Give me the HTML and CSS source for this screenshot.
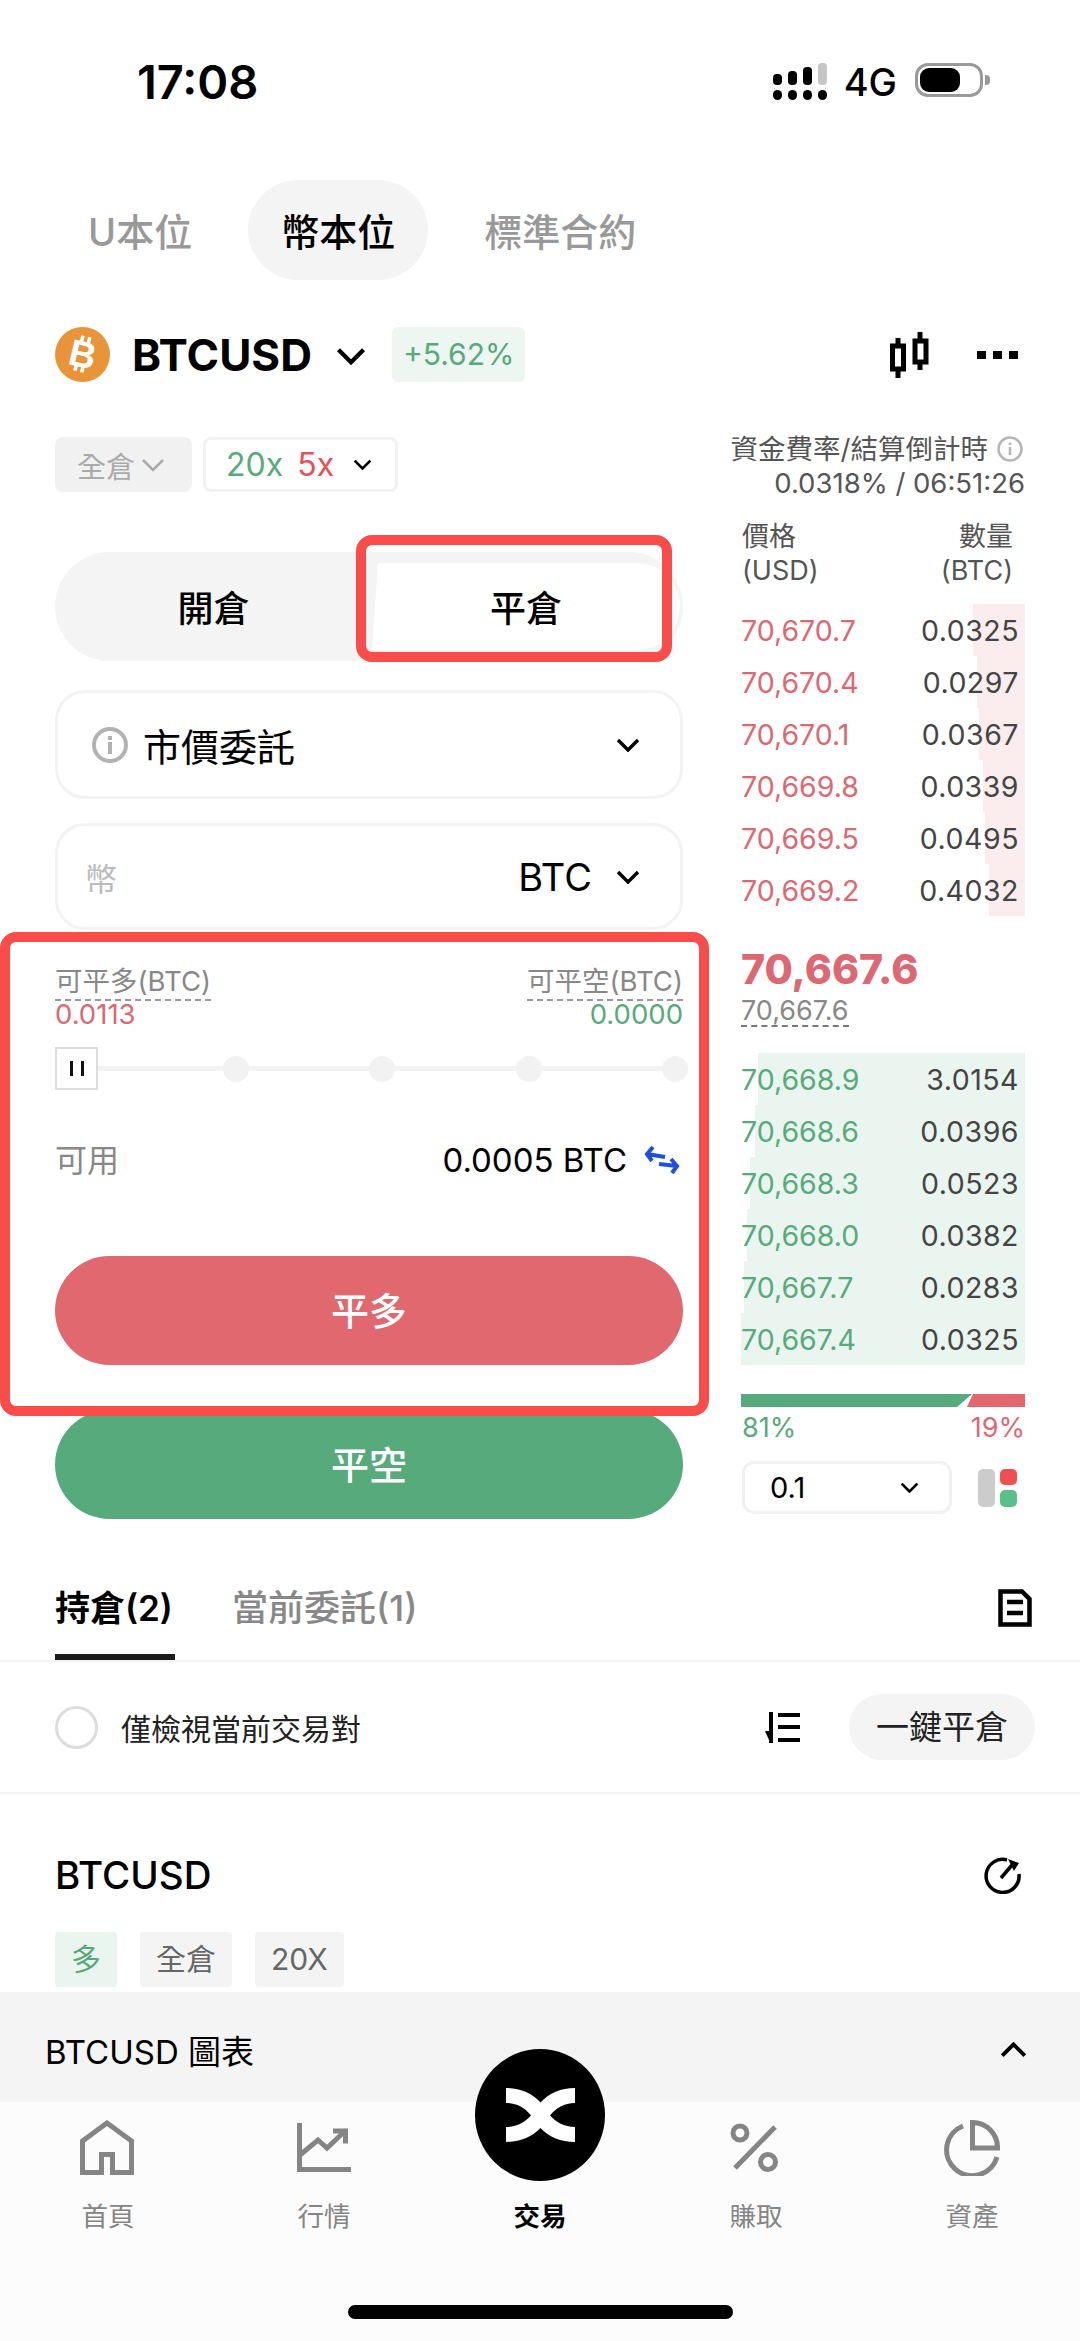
FILE: index.html
```html
<!DOCTYPE html>
<html lang="zh-Hant">
<head>
  <meta charset="UTF-8">
  <title>BTCUSD 交易</title>
  <link rel="stylesheet" href="styles.css">
</head>
<body>
<div class="page">

  <div class="status">
    <div class="time">17:08</div>
    <div class="status-right">
      <svg class="signal" width="54" height="37" viewBox="0 0 54 37">
        <rect x="0" y="11" width="9" height="11" rx="4"/>
        <rect x="15" y="8" width="9" height="14" rx="4"/>
        <rect x="30" y="4" width="9" height="18" rx="4"/>
        <rect x="45" y="0" width="9" height="22" rx="4" fill="#c6c6c6"/>
        <rect x="0" y="27" width="9" height="10" rx="4.5"/>
        <rect x="15" y="27" width="9" height="10" rx="4.5"/>
        <rect x="30" y="27" width="9" height="10" rx="4.5"/>
        <rect x="45" y="27" width="9" height="10" rx="4.5"/>
      </svg>
      <span class="net">4G</span>
      <div class="battery"><div class="battery-fill"></div></div>
      <div class="battery-nub"></div>
    </div>
  </div>

  <div class="market-tabs">
    <div class="market-tab">U本位</div>
    <div class="market-tab on">幣本位</div>
    <div class="market-tab">標準合約</div>
  </div>

  <div class="symbol-row">
    <svg class="coin" width="55" height="55" viewBox="0 0 55 55">
      <circle cx="27.5" cy="27.5" r="27.5" fill="#e8953a"/>
      <g transform="rotate(13 27.5 27.5)" fill="#fff">
        <text x="27.5" y="40" text-anchor="middle" font-family="Liberation Sans" font-weight="700" font-size="37">B</text>
        <rect x="22" y="9" width="3.5" height="6"/><rect x="29" y="9" width="3.5" height="6"/>
        <rect x="22" y="39" width="3.5" height="6"/><rect x="29" y="39" width="3.5" height="6"/>
      </g>
    </svg>
    <div class="symbol-name">BTCUSD</div>
    <svg class="chev chev-symbol" viewBox="0 0 24 14"><path d="M2 2l10 10L22 2"/></svg>
    <div class="change">+5.62%</div>
    <div class="symbol-tools">
      <svg width="40" height="46" viewBox="0 0 40 46" fill="none" stroke="#000" stroke-width="5">
        <path d="M9 6v40M31 0v38"/>
        <rect x="3.500" y="14" width="11" height="23" fill="#fff"/>
        <rect x="26" y="9" width="11" height="21" fill="#fff"/>
      </svg>
      <div class="more"><i></i><i></i><i></i></div>
    </div>
  </div>

  <div class="trade">
    <div class="order">
      <div class="margin-row">
        <div class="margin-mode">全倉<svg class="chev chev-gray" viewBox="0 0 24 14"><path d="M2 2l10 10L22 2"/></svg></div>
        <div class="leverage"><span class="up">20x</span><span class="down-2">5x</span><svg class="chev chev-small" viewBox="0 0 24 14"><path d="M2 2l10 10L22 2"/></svg></div>
      </div>

      <div class="segment">
        <div class="segment-item">開倉</div>
        <div class="segment-item active">平倉</div>
      </div>

      <div class="select type-select">
        <svg width="36" height="36" viewBox="0 0 36 36" fill="none">
          <circle cx="18" cy="18" r="16" stroke="#b2b2b2" stroke-width="4"/>
          <rect x="16" y="15" width="4" height="12" fill="#b2b2b2"/>
          <rect x="16" y="9" width="4" height="4" fill="#b2b2b2"/>
        </svg>
        <span class="select-text">市價委託</span>
        <svg class="chev chev-select" viewBox="0 0 24 14"><path d="M2 2l10 10L22 2"/></svg>
      </div>

      <div class="select coin-select">
        <span class="placeholder">幣</span>
        <span class="coin-code">BTC</span>
        <svg class="chev chev-select" viewBox="0 0 24 14"><path d="M2 2l10 10L22 2"/></svg>
      </div>

      <div class="closable">
        <div class="closable-col">
          <span class="closable-label">可平多(BTC)</span>
          <span class="closable-value down">0.0113</span>
        </div>
        <div class="closable-col right">
          <span class="closable-label">可平空(BTC)</span>
          <span class="closable-value up">0.0000</span>
        </div>
      </div>

      <div class="slider">
        <div class="thumb"><i></i><i></i></div>
        <div class="dot"></div>
        <div class="dot"></div>
        <div class="dot"></div>
        <div class="dot"></div>
      </div>

      <div class="available">
        <span class="available-label">可用</span>
        <span class="available-value">0.0005 BTC</span>
        <svg class="swap" width="36" height="30" viewBox="0 0 36 30" fill="none" stroke="#1f4fe0" stroke-width="4">
          <path d="M3 9l18 3M9 2L3 9l5 7"/>
          <path d="M15 19l18 2M27 14l6 7-5 7"/>
        </svg>
      </div>

      <div class="action long">平多</div>
      <div class="action short">平空</div>
    </div>

    <div class="book">
      <div class="funding">
        <div class="funding-title">資金費率/結算倒計時
          <svg width="26" height="26" viewBox="0 0 26 26" fill="none">
            <circle cx="13" cy="13" r="11.5" stroke="#b5b5b5" stroke-width="2.5"/>
            <path d="M13 11v8M13 6.500v2.500" stroke="#b5b5b5" stroke-width="2.500"/>
          </svg>
        </div>
        <div>0.0318% / 06:51:26</div>
      </div>

      <div class="book-head">
        <div>價格<br>(USD)</div>
        <div class="right">數量<br>(BTC)</div>
      </div>

      <div class="asks">
        <div class="book-row" style="--depth:52px"><span class="down">70,670.7</span><span>0.0325</span></div>
        <div class="book-row" style="--depth:48px"><span class="down">70,670.4</span><span>0.0297</span></div>
        <div class="book-row" style="--depth:46px"><span class="down">70,670.1</span><span>0.0367</span></div>
        <div class="book-row" style="--depth:42px"><span class="down">70,669.8</span><span>0.0339</span></div>
        <div class="book-row" style="--depth:40px"><span class="down">70,669.5</span><span>0.0495</span></div>
        <div class="book-row" style="--depth:36px"><span class="down">70,669.2</span><span>0.4032</span></div>
      </div>

      <div class="last-price">70,667.6</div>
      <div class="mark-price">70,667.6</div>

      <div class="bids">
        <div class="book-row" style="--depth:267px"><span class="up">70,668.9</span><span>3.0154</span></div>
        <div class="book-row" style="--depth:270px"><span class="up">70,668.6</span><span>0.0396</span></div>
        <div class="book-row" style="--depth:275px"><span class="up">70,668.3</span><span>0.0523</span></div>
        <div class="book-row" style="--depth:278px"><span class="up">70,668.0</span><span>0.0382</span></div>
        <div class="book-row" style="--depth:281px"><span class="up">70,667.7</span><span>0.0283</span></div>
        <div class="book-row" style="--depth:284px"><span class="up">70,667.4</span><span>0.0325</span></div>
      </div>

      <div class="ratio">
        <div class="ratio-long"></div>
        <div class="ratio-short"></div>
      </div>
      <div class="ratio-text"><span class="up">81%</span><span class="down">19%</span></div>

      <div class="book-tools">
        <div class="step">0.1<svg class="chev chev-small" viewBox="0 0 24 14"><path d="M2 2l10 10L22 2"/></svg></div>
        <div class="layout-icon">
          <div class="layout-bar"></div>
          <div class="layout-dots"><i class="red"></i><i class="green"></i></div>
        </div>
      </div>
    </div>
  </div>

  <div class="pos-tabs">
    <div class="pos-tab on">持倉(2)</div>
    <div class="pos-tab">當前委託(1)</div>
    <svg class="pos-note" width="34" height="38" viewBox="0 0 34 38" fill="none" stroke="#000" stroke-width="4.500">
      <path d="M2.500 2.500H24l7.500 7.500v25.500h-29z"/>
      <path d="M9 13h16M9 24h16"/>
    </svg>
  </div>

  <div class="filter">
    <div class="radio"></div>
    <span class="filter-text">僅檢視當前交易對</span>
    <svg class="sort" width="35" height="31" viewBox="0 0 35 31">
      <rect x="13" y="1" width="22" height="4"/>
      <rect x="13" y="13" width="22" height="4"/>
      <rect x="13" y="26" width="22" height="4"/>
      <rect x="4" y="0" width="4" height="31"/>
      <path d="M0 19l4 0 0 9z"/>
    </svg>
    <div class="close-all">一鍵平倉</div>
  </div>

  <div class="position">
    <div class="position-head">
      <span class="position-name">BTCUSD</span>
      <svg width="38" height="38" viewBox="0 0 38 38" fill="none" stroke="#000" stroke-width="3.500">
        <path d="M23 4A16.500 16.500 0 1 0 35 18"/>
        <path d="M17 22L28 9"/>
        <path d="M24 3l11 4-5 8z" fill="#000" stroke="none"/>
      </svg>
    </div>
    <div class="tags">
      <span class="tag tag-long">多</span>
      <span class="tag">全倉</span>
      <span class="tag">20X</span>
    </div>
  </div>

  <div class="chart-bar">
    <span>BTCUSD 圖表</span>
    <svg class="chev chev-up" viewBox="0 0 24 14"><path d="M2 12L12 2l10 10"/></svg>
  </div>

  <div class="nav">
    <div class="nav-items">
      <div class="nav-item">
        <svg width="56" height="56" viewBox="0 0 56 56" fill="none" stroke="#858585" stroke-width="5">
          <path d="M21.500 52.500H2.500V21L27 3l24.500 18v31.500H32.500v-18h-11z"/>
        </svg>
        <span>首頁</span>
      </div>
      <div class="nav-item">
        <svg width="56" height="56" viewBox="0 0 56 56" fill="none" stroke="#858585" stroke-width="5">
          <path d="M3.500 3v46.500H55"/>
          <path d="M4 35l18-15 9 8 19-18"/>
          <path d="M37 11h12.500v12.500"/>
        </svg>
        <span>行情</span>
      </div>
      <div class="nav-item on">
        <div class="nav-logo">
          <svg width="69" height="54" viewBox="0 0 69 54" fill="#fff">
            <path d="M0 0C14 0 26 5 34.500 14.500 43 5 55 0 69 0V15C58 15 50 20 44 27.500 50 34 58 39 69 39V54C55 54 43 49 34.500 40 26 49 14 54 0 54V39C11 39 19 34 25 27.500 19 20 11 15 0 15Z"/>
          </svg>
        </div>
        <div class="nav-spacer"></div>
        <span>交易</span>
      </div>
      <div class="nav-item">
        <svg width="56" height="56" viewBox="0 0 56 56" fill="none" stroke="#858585" stroke-width="5">
          <circle cx="12" cy="13" r="7"/>
          <path d="M47 7L7 48"/>
          <circle cx="40" cy="42" r="7.500"/>
        </svg>
        <span>賺取</span>
      </div>
      <div class="nav-item">
        <svg width="56" height="56" viewBox="0 0 56 56" fill="none" stroke="#858585" stroke-width="5">
          <path d="M19 6A25.700 25.700 0 1 0 53 37"/>
          <path d="M28.500 2.500V28H53.500A25 25 0 0 0 28.500 2.500Z"/>
        </svg>
        <span>資產</span>
      </div>
    </div>
    <div class="home-bar"></div>
  </div>

  <div class="mark mark-tab"></div>
  <div class="mark mark-panel"></div>
</div>
</body>
</html>
```

FILE: styles.css
```css
* {
  box-sizing: border-box;
}
html, body {
  margin: 0;
  padding: 0;
  background: #fff;
}
.page {
  position: relative;
  width: 1080px;
  height: 2341px;
  overflow: hidden;
  background: #fff;
  color: #000;
  font-family: Inter, "Noto Sans CJK TC", sans-serif;
}
svg {
  display: block;
  flex: none;
}
.up { color: #57aa7b; }
.down { color: #dc6873; }
.right { text-align: right; }

/* chevrons */
.chev {
  fill: none;
  stroke: #000;
  stroke-width: 3.4;
}
.chev-symbol { width: 30px; height: 18px; margin: 2px 0 0 24px; }
.chev-gray { width: 24px; height: 14px; margin-left: 6px; stroke: #aaa; stroke-width: 2.5; }
.chev-small { width: 19px; height: 11px; }
.chev-select { width: 24px; height: 14px; }
.chev-up { width: 27px; height: 16px; }

/* status bar */
.status {
  height: 160px;
  display: flex;
  align-items: center;
  justify-content: space-between;
  padding: 0 90px 0 137px;
}
.time {
  margin-top: 2px;
  font-size: 47px;
  font-weight: 600;
}
.status-right {
  display: flex;
  align-items: center;
}
.signal { margin-top: 2px; }
.net {
  margin: 3px 18px 0 17px;
  font-size: 38px;
  font-weight: 500;
  line-height: 40px;
}
.battery {
  width: 68px;
  height: 34px;
  padding: 2px;
  border: 3px solid #999;
  border-radius: 13px;
}
.battery-fill {
  width: 40px;
  height: 24px;
  background: #000;
  border-radius: 9px;
}
.battery-nub {
  width: 5px;
  height: 10px;
  margin-left: 2px;
  background: #999;
  border-radius: 0 4px 4px 0;
}

/* market tabs */
.market-tabs {
  display: flex;
  gap: 23px;
  margin-top: 20px;
  padding-left: 55px;
}
.market-tab {
  height: 100px;
  padding: 0 33px;
  border-radius: 50px;
  font-size: 38px;
  font-weight: 500;
  line-height: 105px;
  color: #999;
}
.market-tab.on {
  background: #f4f4f4;
  color: #000;
}

/* symbol row */
.symbol-row {
  display: flex;
  align-items: center;
  height: 55px;
  margin-top: 47px;
  padding: 0 62px 0 55px;
}
.symbol-name {
  margin-left: 22px;
  font-size: 44px;
  font-weight: 700;
}
.change {
  height: 55px;
  margin-left: 26px;
  padding: 0 11px;
  background: #edf6f1;
  border-radius: 6px;
  color: #57aa7b;
  font-size: 30px;
  line-height: 55px;
}
.symbol-tools {
  display: flex;
  align-items: center;
  gap: 48px;
  margin-left: auto;
}
.more {
  display: flex;
  gap: 7px;
}
.more i {
  width: 9px;
  height: 8px;
  background: #000;
}

/* trade: order form + book */
.trade {
  display: grid;
  grid-template-columns: 628px 284px;
  gap: 58px;
  margin-top: 50px;
  padding-left: 55px;
}
.order {
  padding-top: 5px;
}
.margin-row {
  display: flex;
  gap: 11px;
}
.margin-mode {
  display: flex;
  align-items: center;
  width: 137px;
  height: 55px;
  padding-left: 22px;
  background: #f1f1f1;
  border-radius: 8px;
  color: #aaa;
  font-size: 29px;
}
.leverage {
  display: flex;
  align-items: center;
  width: 195px;
  height: 55px;
  padding-left: 20px;
  border: 3px solid #f2f2f2;
  border-radius: 8px;
  font-size: 32px;
}
.down-2 {
  margin: 0 19px 0 14px;
  color: #ea4f56;
}
.segment {
  display: flex;
  height: 109px;
  margin-top: 60px;
  padding: 11px 3px 11px 0;
  background: #f4f4f4;
  border-radius: 55px;
}
.segment-item {
  flex: 0 0 317px;
  font-size: 36px;
  font-weight: 500;
  line-height: 92px;
  text-align: center;
}
.segment-item.active {
  flex: 1;
  background: #fff;
  border-radius: 0 44px 44px 0;
  clip-path: polygon(6px 0, 100% 0, 100% 100%, 0 100%);
}
.select {
  display: flex;
  align-items: center;
  border: 3px solid #f3f3f3;
  border-radius: 30px;
}
.type-select {
  height: 109px;
  margin-top: 29px;
  padding: 0 40px 0 34px;
}
.type-select .chev-select {
  margin-left: auto;
}
.select-text {
  margin-left: 15px;
  font-size: 38px;
}
.coin-select {
  height: 107px;
  margin-top: 24px;
  padding: 0 40px 0 27px;
}
.placeholder {
  color: #bbb;
  font-size: 32px;
}
.coin-code {
  margin-left: auto;
  margin-right: 24px;
  font-size: 38px;
}
.closable {
  display: flex;
  justify-content: space-between;
  margin-top: 35px;
}
.closable-col {
  display: flex;
  flex-direction: column;
  align-items: flex-start;
}
.closable-col.right {
  align-items: flex-end;
}
.closable-label {
  height: 36px;
  border-bottom: 2px dashed #999;
  color: #888;
  font-size: 27.500px;
  line-height: 32px;
}
.closable-value {
  font-size: 27.500px;
  line-height: 27px;
}
.slider {
  display: flex;
  align-items: center;
  justify-content: space-between;
  width: 633px;
  height: 43px;
  margin-top: 19px;
  background: linear-gradient(#f3f3f3, #f3f3f3) center / 100% 5px no-repeat;
}
.thumb {
  display: flex;
  align-items: center;
  justify-content: center;
  gap: 8px;
  width: 43px;
  height: 43px;
  margin-right: 4px;
  background: #fff;
  border: 2px solid #ddd;
}
.thumb i {
  width: 3px;
  height: 15px;
  background: #111;
}
.dot {
  width: 26px;
  height: 26px;
  background: #f2f2f2;
  border-radius: 50%;
}
.available {
  display: flex;
  align-items: center;
  height: 40px;
  margin-top: 50px;
}
.available-label {
  margin-top: -5px;
  color: #888;
  font-size: 32px;
}
.available-value {
  margin-left: auto;
  font-size: 33px;
}
.swap {
  margin: 0 3px 0 17px;
}
.action {
  height: 109px;
  border-radius: 55px;
  color: #fff;
  font-size: 38px;
  font-weight: 500;
  line-height: 111px;
  text-align: center;
}
.action.long {
  margin-top: 76px;
  background: #e0686e;
}
.action.short {
  margin-top: 45px;
  background: #57aa7b;
}

/* order book */
.funding {
  margin-left: -15px;
  color: #555;
  font-size: 27.500px;
  line-height: 34px;
  text-align: right;
  white-space: nowrap;
}
.funding-title {
  display: flex;
  align-items: center;
  justify-content: flex-end;
  gap: 9px;
  margin-right: 2px;
}
.book-head {
  display: flex;
  justify-content: space-between;
  margin-top: 20px;
  padding: 0 12px 0 1px;
  color: #555;
  font-size: 27px;
  line-height: 34px;
}
.asks {
  margin-top: 16px;
  --bar: #fbeded;
}
.bids {
  margin-top: 26px;
  --bar: #ebf5f0;
}
.book-row {
  display: flex;
  align-items: center;
  justify-content: space-between;
  height: 52px;
  padding-right: 6px;
  background: linear-gradient(var(--bar), var(--bar)) right / var(--depth) 100% no-repeat;
  color: #444;
  font-size: 28.500px;
}
.book-row span:last-child {
  letter-spacing: 0.5px;
}
.last-price {
  margin-top: 30px;
  color: #dc6873;
  font-size: 41px;
  font-weight: 800;
  line-height: 46px;
}
.mark-price {
  display: table;
  margin-top: 5px;
  border-bottom: 2px dashed #777;
  color: #888;
  font-size: 27px;
  line-height: 28px;
}
.ratio {
  display: flex;
  height: 13px;
  margin-top: 29px;
}
.ratio-long {
  flex: 0 0 231px;
  background: #57aa7b;
  clip-path: polygon(0 0, 100% 0, calc(100% - 15px) 100%, 0 100%);
}
.ratio-short {
  flex: 1;
  margin-left: -5px;
  background: #e0686e;
  clip-path: polygon(6px 0, 100% 0, 100% 100%, 0 100%);
}
.ratio-text {
  display: flex;
  justify-content: space-between;
  margin-top: 6px;
  padding-left: 1px;
  font-size: 27px;
  line-height: 30px;
}
.book-tools {
  display: flex;
  align-items: center;
  margin-top: 18px;
}
.step {
  display: flex;
  align-items: center;
  justify-content: space-between;
  width: 210px;
  height: 53px;
  margin-left: 1px;
  padding: 0 30px 0 25px;
  border: 3px solid #f1f1f1;
  border-radius: 12px;
  font-size: 29px;
}
.layout-icon {
  display: flex;
  gap: 5px;
  height: 38px;
  margin-left: 26px;
}
.layout-bar {
  width: 17px;
  background: #ccc;
  border-radius: 5px;
}
.layout-dots {
  display: flex;
  flex-direction: column;
  gap: 5px;
}
.layout-dots i {
  width: 17px;
  height: 16.500px;
  border-radius: 5px;
}
.red { background: #ee4f4f; }
.green { background: #5ac08a; }

/* positions */
.pos-tabs {
  display: flex;
  gap: 57px;
  height: 143px;
  padding: 60px 48px 0 55px;
  border-bottom: 2px solid #f3f3f3;
}
.pos-tab {
  height: 81px;
  min-width: 120px;
  color: #888;
  font-size: 36px;
  font-weight: 500;
  line-height: 58px;
}
.pos-tab.on {
  border-bottom: 6px solid #1c1c1c;
  color: #000;
  font-size: 35px;
  font-weight: 600;
}
.pos-note {
  margin: 10px 0 0 auto;
}
.filter {
  display: flex;
  align-items: center;
  height: 132px;
  padding: 0 45px 0 55px;
  border-bottom: 2px solid #f3f3f3;
}
.radio {
  width: 43px;
  height: 43px;
  border: 3px solid #ddd;
  border-radius: 50%;
}
.filter-text {
  margin-left: 23px;
  color: #222;
  font-size: 30px;
}
.sort {
  margin-left: auto;
}
.close-all {
  height: 66px;
  margin-left: 49px;
  padding: 0 27px;
  background: #f4f4f4;
  border-radius: 33px;
  color: #222;
  font-size: 33px;
  line-height: 66px;
}
.position {
  padding: 61px 58px 0 55px;
}
.position-head {
  display: flex;
  align-items: center;
  justify-content: space-between;
  height: 40px;
}
.position-name {
  font-size: 38.500px;
  font-weight: 500;
}
.tags {
  display: flex;
  gap: 23px;
  margin-top: 37px;
}
.tag {
  height: 55px;
  padding: 0 16px;
  background: #f4f4f4;
  border-radius: 4px;
  color: #666;
  font-size: 30px;
  line-height: 55px;
}
.tag-long {
  background: #ebf5f0;
  color: #57aa7b;
}

/* chart bar and nav */
.chart-bar {
  display: flex;
  align-items: center;
  justify-content: space-between;
  height: 110px;
  margin-top: 5px;
  padding: 6px 53px 0 45px;
  background: #f4f4f4;
  font-size: 33px;
}
.nav {
  height: 239px;
  background: #fcfcfc;
}
.nav-items {
  display: grid;
  grid-template-columns: repeat(5, 1fr);
  padding-top: 18px;
}
.nav-item {
  position: relative;
  display: flex;
  flex-direction: column;
  align-items: center;
  color: #858585;
  font-size: 26.500px;
  line-height: 36px;
}
.nav-item span {
  margin-top: 22px;
}
.nav-item.on {
  color: #000;
  font-weight: 600;
}
.nav-spacer {
  height: 56px;
}
.nav-logo {
  position: absolute;
  top: -71px;
  left: 43px;
  display: flex;
  align-items: center;
  justify-content: center;
  width: 130px;
  height: 132px;
  background: #000;
  border-radius: 50%;
}
.home-bar {
  width: 385px;
  height: 14px;
  margin: 71px auto 0;
  background: #000;
  border-radius: 7px;
}

/* red annotation boxes */
.mark {
  position: absolute;
  border: 10px solid #f94c4b;
  border-radius: 16px;
}
.mark-tab {
  left: 356px;
  top: 535px;
  width: 316px;
  height: 127px;
}
.mark-panel {
  left: 0;
  top: 932px;
  width: 709px;
  height: 484px;
}
```
